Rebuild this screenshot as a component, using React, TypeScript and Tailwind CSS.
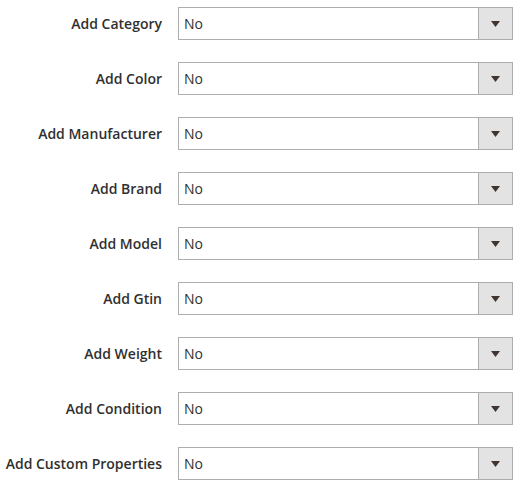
const fields = [
    'Add Category',
    'Add Color',
    'Add Manufacturer',
    'Add Brand',
    'Add Model',
    'Add Gtin',
    'Add Weight',
    'Add Condition',
    'Add Custom Properties',
];

function SelectField() {
    return (
        <div className="flex h-[33px] w-[335px] border border-[#adadad] bg-white">
            <div className="flex flex-1 items-center pl-[5px] text-[14px] text-[#303030]">No</div>
            <div className="flex w-[34px] items-center justify-center border-l border-[#adadad] bg-[#e3e3e3]">
                <svg width="9" height="6" viewBox="0 0 9 6">
                    <path d="M0 0H9L4.5 6Z" fill="#41362f" />
                </svg>
            </div>
        </div>
    );
}

export default function App() {
    return (
        <div
            className="flex min-h-[493px] w-[527px] flex-col gap-[22px] bg-white pt-[7px]"
            style={{ fontFamily: '"Open Sans", sans-serif' }}
        >
            {fields.map((label) => (
                <div key={label} className="flex items-center gap-[16px]">
                    <label className="w-[162px] text-right text-[14px] font-semibold text-[#303030]">
                        {label}
                    </label>
                    <SelectField />
                </div>
            ))}
        </div>
    );
}
